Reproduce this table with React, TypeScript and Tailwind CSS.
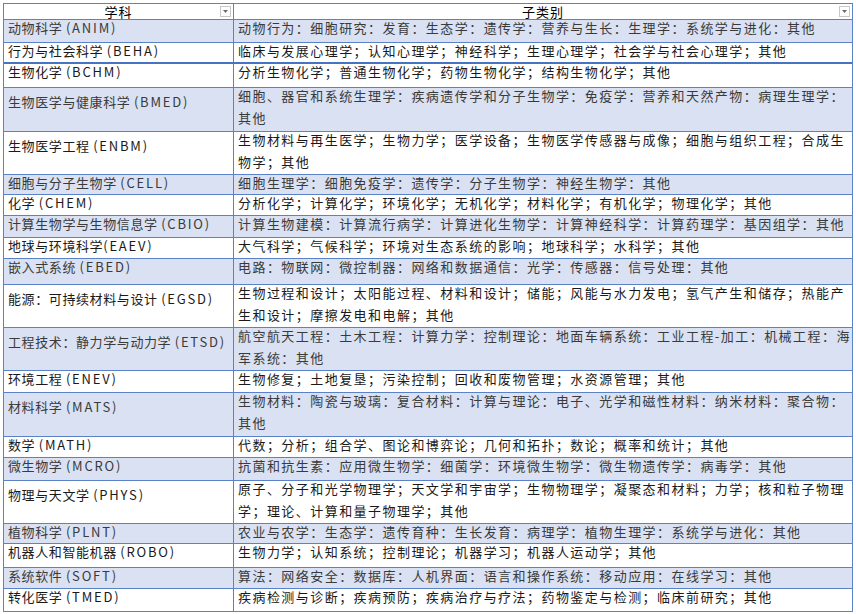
import React from "react";

type Row = { name: string; code: string; lines: string[]; h: number; blue: boolean; thick?: boolean };

const rows: Row[] = [
  { name: "动物科学 ", code: "(ANIM)", lines: ["动物行为：细胞研究：发育：生态学：遗传学：营养与生长：生理学：系统学与进化：其他"], h: 23, blue: true },
  { name: "行为与社会科学 ", code: "(BEHA)", lines: ["临床与发展心理学；认知心理学；神经科学；生理心理学；社会学与社会心理学；其他"], h: 21, blue: false, thick: true },
  { name: "生物化学 ", code: "(BCHM)", lines: ["分析生物化学；普通生物化学；药物生物化学；结构生物化学；其他"], h: 24, blue: false },
  { name: "生物医学与健康科学 ", code: "(BMED)", lines: ["细胞、器官和系统生理学：疾病遗传学和分子生物学：免疫学：营养和天然产物：病理生理学：", "其他"], h: 44, blue: true },
  { name: "生物医学工程 ", code: "(ENBM)", lines: ["生物材料与再生医学；生物力学；医学设备；生物医学传感器与成像；细胞与组织工程；合成生", "物学；其他"], h: 43, blue: false },
  { name: "细胞与分子生物学 ", code: "(CELL)", lines: ["细胞生理学：细胞免疫学：遗传学：分子生物学：神经生物学：其他"], h: 20, blue: true },
  { name: "化学 ", code: "(CHEM)", lines: ["分析化学；计算化学；环境化学；无机化学；材料化学；有机化学；物理化学；其他"], h: 21, blue: false },
  { name: "计算生物学与生物信息学 ", code: "(CBIO)", lines: ["计算生物建模：计算流行病学：计算进化生物学：计算神经科学：计算药理学：基因组学：其他"], h: 22, blue: true },
  { name: "地球与环境科学", code: "(EAEV)", lines: ["大气科学；气候科学；环境对生态系统的影响；地球科学；水科学；其他"], h: 21, blue: false },
  { name: "嵌入式系统 ", code: "(EBED)", lines: ["电路：物联网：微控制器：网络和数据通信：光学：传感器：信号处理：其他"], h: 26, blue: true },
  { name: "能源：可持续材料与设计 ", code: "(EGSD)", lines: ["生物过程和设计；太阳能过程、材料和设计；储能；风能与水力发电；氢气产生和储存；热能产", "生和设计；摩擦发电和电解；其他"], h: 43, blue: false },
  { name: "工程技术：静力学与动力学 ", code: "(ETSD)", lines: ["航空航天工程：土木工程：计算力学：控制理论：地面车辆系统：工业工程-加工：机械工程：海", "军系统：其他"], h: 43, blue: true },
  { name: "环境工程 ", code: "(ENEV)", lines: ["生物修复；土地复垦；污染控制；回收和废物管理；水资源管理；其他"], h: 22, blue: false },
  { name: "材料科学 ", code: "(MATS)", lines: ["生物材料：陶瓷与玻璃：复合材料：计算与理论：电子、光学和磁性材料：纳米材料：聚合物：", "其他"], h: 44, blue: true },
  { name: "数学 ", code: "(MATH)", lines: ["代数；分析；组合学、图论和博弈论；几何和拓扑；数论；概率和统计；其他"], h: 21, blue: false },
  { name: "微生物学 ", code: "(MCRO)", lines: ["抗菌和抗生素：应用微生物学：细菌学：环境微生物学：微生物遗传学：病毒学：其他"], h: 23, blue: true },
  { name: "物理与天文学 ", code: "(PHYS)", lines: ["原子、分子和光学物理学；天文学和宇宙学；生物物理学；凝聚态和材料；力学；核和粒子物理", "学；理论、计算和量子物理学；其他"], h: 43, blue: false },
  { name: "植物科学 ", code: "(PLNT)", lines: ["农业与农学：生态学：遗传育种：生长发育：病理学：植物生理学：系统学与进化：其他"], h: 20, blue: true },
  { name: "机器人和智能机器 ", code: "(ROBO)", lines: ["生物力学；认知系统；控制理论；机器学习；机器人运动学；其他"], h: 24, blue: false },
  { name: "系统软件 ", code: "(SOFT)", lines: ["算法：网络安全：数据库：人机界面：语言和操作系统：移动应用：在线学习：其他"], h: 21, blue: true },
  { name: "转化医学 ", code: "(TMED)", lines: ["疾病检测与诊断；疾病预防；疾病治疗与疗法；药物鉴定与检测；临床前研究；其他"], h: 22, blue: false },
];

const font = { fontFamily: '"Noto Sans CJK SC", "Noto Sans", sans-serif' };

function DropBtn() {
  return (
    <div className="absolute right-[2px] top-[2px] w-[11px] h-[11px] border border-[#c8c8c8] bg-white flex items-center justify-center">
      <svg width="5" height="3" viewBox="0 0 5 3">
        <path d="M0 0 L5 0 L2.5 3 Z" fill="#6b6b6b" />
      </svg>
    </div>
  );
}

export default function App() {
  return (
    <div className="w-[856px] h-[614px] bg-white pt-[3px] pl-[3px]" style={font}>
      <div className="w-[850px] border border-[#5b82c9] flex flex-col">
        <div className="flex h-[16px] border-b border-[#5b82c9] bg-white">
          <div className="w-[230px] border-r border-[#5b82c9] relative">
            <div className="text-center text-[13px] leading-[15px] text-black tracking-[1px]">学科</div>
            <DropBtn />
          </div>
          <div className="flex-1 relative">
            <div className="text-center text-[13px] leading-[15px] text-black tracking-[1px]">子类别</div>
            <DropBtn />
          </div>
        </div>
        {rows.map((r, i) => {
          const last = i === rows.length - 1;
          const tall = r.lines.length > 1;
          return (
            <div
              key={r.code}
              className={
                "flex " +
                (r.blue ? "bg-[#d9e1f2] text-[#3a3a3a] " : "bg-white text-[#1a1a1a] ") +
                (last ? "" : r.thick ? "border-b-2 border-[#4673c4] " : "border-b border-[#5b82c9] ")
              }
              style={{ height: r.h }}
            >
              <div
                className={
                  "w-[230px] shrink-0 border-r border-[#5b82c9] pl-[4px] text-[13px] leading-[16px] tracking-[0.6px] whitespace-nowrap " +
                  (tall ? "pt-[6px]" : "pt-0")
                }
              >
                {r.name}
                <span className="tracking-[1.8px]">{r.code}</span>
              </div>
              <div className="flex-1 pl-[4px] flex flex-col gap-[6px] text-[13px] leading-[16px] tracking-[1.45px] whitespace-nowrap">
                {r.lines.map((l) => (
                  <div key={l}>{l}</div>
                ))}
              </div>
            </div>
          );
        })}
      </div>
    </div>
  );
}
